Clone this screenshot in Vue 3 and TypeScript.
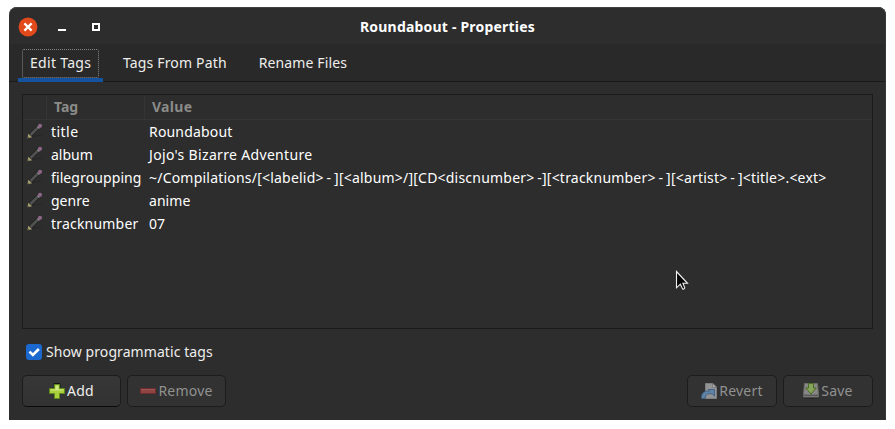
<script setup lang="ts">
import { ref } from 'vue'

interface Label {
  text: string
  // tracking in hundredths of a pixel
  track: number
}

interface TagRow {
  tag: Label
  value: Label
}

const rows: TagRow[] = [
  { tag: { text: 'title', track: 45 }, value: { text: 'Roundabout', track: 17 } },
  { tag: { text: 'album', track: 0 }, value: { text: "Jojo's Bizarre Adventure", track: 33 } },
  {
    tag: { text: 'filegroupping', track: 10 },
    value: {
      text: '~/Compilations/[<labelid> - ][<album>/][CD<discnumber> -][<tracknumber> - ][<artist> - ]<title>.<ext>',
      track: 21,
    },
  },
  { tag: { text: 'genre', track: 0 }, value: { text: 'anime', track: 5 } },
  { tag: { text: 'tracknumber', track: 20 }, value: { text: '07', track: 10 } },
]

const tabs: Label[] = [
  { text: 'Edit Tags', track: 30 },
  { text: 'Tags From Path', track: 16 },
  { text: 'Rename Files', track: 12 },
]

const activeTab = ref(0)
const showProgrammatic = ref(true)

const tracking = (label: Label) => ({ letterSpacing: `${label.track / 100}px` })
</script>

<template>
  <main class="window">
    <header class="titlebar">
      <div class="controls">
        <button class="close" aria-label="Close">
          <svg width="20" height="20" viewBox="0 0 20 20">
            <circle cx="10" cy="10" r="9.4" fill="#e2491b" />
            <path d="M6.400 6.400l7.200 7.200M13.600 6.400l-7.200 7.200" stroke="#fff" stroke-width="2.200" />
          </svg>
        </button>
        <button class="minimize" aria-label="Minimize"></button>
        <button class="maximize" aria-label="Maximize"></button>
      </div>
      <h1>Roundabout - Properties</h1>
    </header>

    <nav class="tabs">
      <button
        v-for="(tab, i) in tabs"
        :key="tab.text"
        class="tab"
        :class="{ active: i === activeTab }"
        @click="activeTab = i"
      >
        <span class="tab-label" :style="tracking(tab)">{{ tab.text }}</span>
      </button>
    </nav>

    <section class="page">
      <div class="list">
        <div class="row head">
          <span class="cell"></span>
          <span class="cell">Tag</span>
          <span class="cell value-head">Value</span>
        </div>
        <div v-for="row in rows" :key="row.tag.text" class="row">
          <span class="cell icon">
            <svg width="16" height="16" viewBox="0 0 16 16">
              <path d="M5 13.500L15 12" stroke="#272727" />
              <path d="M3.500 12L12.500 3" stroke="#222" stroke-width="4.200" />
              <path d="M3.500 12L12.500 3" stroke="#50524f" stroke-width="2.600" />
              <path d="M10.500 3.500l2 2" stroke="#858585" stroke-width="1.500" />
              <circle cx="13" cy="2.800" r="2.100" fill="#8e6588" />
              <path d="M.5 15.200l.8-4.400 3.800 3.400z" fill="#a59f6e" />
              <path d="M.5 15.200l.4-1.800 1.400 1.200z" fill="#5c5a46" />
            </svg>
          </span>
          <span class="cell" :style="tracking(row.tag)">{{ row.tag.text }}</span>
          <span class="cell value" :style="tracking(row.value)">{{ row.value.text }}</span>
        </div>
      </div>

      <label class="check">
        <input v-model="showProgrammatic" type="checkbox" />
        <span class="box">
          <svg v-if="showProgrammatic" width="16" height="16" viewBox="0 0 16 16">
            <path d="M3.500 7.600l3.400 3.400 6-6" fill="none" stroke="#fff" stroke-width="2.600" />
          </svg>
        </span>
        <span class="check-text">Show programmatic tags</span>
      </label>

      <footer class="actions">
        <button class="btn wide">
          <svg width="16" height="16" viewBox="0 0 16 16">
            <path d="M5 1.500V.5h6v5M11 5.500h5" fill="none" stroke="#151515" />
            <path d="M5.500 1.500h5v4h5v5h-5v5h-5v-5h-5v-5h5z" fill="#a9cf3b" stroke="#5f8a1e" />
            <path d="M6.500 10V2.500h3v4h5v1h-13v-1h5" fill="#d3e886" />
          </svg>
          <span>Add</span>
        </button>
        <button class="btn wide off">
          <svg width="16" height="16" viewBox="0 0 16 16">
            <rect x=".5" y="5.500" width="15" height="5" fill="#914444" stroke="#6d2c2e" />
            <path d="M1 6.500h14" stroke="#9d5656" />
          </svg>
          <span>Remove</span>
        </button>
        <span class="spacer"></span>
        <button class="btn off">
          <svg width="16" height="16" viewBox="0 0 16 16">
            <path d="M4.500.5h7.500l3.500 3.500v11.500h-11z" fill="#929394" stroke="#7c7e7f" />
            <path d="M11.500.5v4h4z" fill="#b0b0b0" stroke="#6b6c6c" stroke-width=".7" />
            <path d="M.5 15.500C.2 10.500 3 7.300 8.700 8.100L7.200 6.500h6.300v6.600l-2.200-2C7.500 9.900 4.300 11.200 4 15.500z" fill="#5f83a5" stroke="#3d5f82" stroke-width=".9" />
          </svg>
          <span>Revert</span>
        </button>
        <button class="btn off">
          <svg width="16" height="16" viewBox="0 0 16 16">
            <ellipse cx="8" cy="14.500" rx="8" ry="1.400" fill="#252525" />
            <path d="M1.500.5h13l1 11v2.500H.5v-2.500z" fill="#868786" stroke="#6b6c6a" />
            <path d="M.8 12.300h14.400" stroke="#595a59" stroke-width="1.600" />
            <path d="M5.500.5h5v4.500h2.700L8 11 2.800 5h2.700z" fill="#86a35a" stroke="#4c6b25" />
          </svg>
          <span>Save</span>
        </button>
      </footer>
    </section>

    <svg class="pointer" width="14" height="21" viewBox="0 0 14 21">
      <path d="M1.500 1.500v16.300l3.800-3.600 2.300 4.700q1.500.7 2.200-1L7.900 13.300h4.600z" fill="#050505" stroke="#f2f2f2" stroke-width="1.100" />
    </svg>
  </main>
</template>

<style>
body {
  background: #fff;
}
</style>

<style scoped>
* {
  box-sizing: border-box;
}
.window {
  position: relative;
  display: flex;
  flex-direction: column;
  width: 877px;
  height: 413px;
  margin: 7px 9px;
  overflow: hidden;
  background: #2d2d2d;
  border-radius: 8px 8px 0 0;
  box-shadow: inset 0 1px #404040, inset -1px 0 #373737;
  font: 14px/22px "Noto Sans", sans-serif;
  color: #fff;
}
button {
  font: inherit;
  color: inherit;
  border: 0;
  padding: 0;
  margin: 0;
  background: none;
}
svg {
  display: block;
  flex: none;
}
.titlebar {
  display: grid;
  grid-template-columns: 120px 1fr 120px;
  align-items: center;
  height: 37px;
  padding-top: 2px;
}
.controls {
  display: flex;
  align-items: center;
  padding-left: 9px;
}
.minimize {
  width: 8px;
  height: 8px;
  margin-left: 20px;
  border-bottom: 2px solid #fff;
}
.maximize {
  width: 8px;
  height: 8px;
  margin-left: 26px;
  border: 2px solid #fff;
}
h1 {
  margin: 0;
  text-align: center;
  font-size: 14px;
  line-height: 22px;
  letter-spacing: 0.2px;
}
.tabs {
  display: flex;
  gap: 8px;
  height: 38px;
  padding-left: 9px;
  margin-right: 1px;
  background: #292929;
  border-bottom: 1px solid #1a1a1a;
  color: #eeeeec;
}
.tab {
  height: 38px;
  padding: 5px 4px 0;
  border-bottom: 4px solid transparent;
}
.tab.active {
  border-bottom-color: #15539e;
}
.tab-label {
  display: block;
  height: 29px;
  padding: 2px 7px 0;
  border: 1px solid transparent;
  border-radius: 2px;
  white-space: nowrap;
}
.tab + .tab .tab-label {
  padding: 2px 7px 0;
}
.active .tab-label {
  width: 77px;
  border: 1px dotted #858585;
}
.page {
  display: flex;
  flex-direction: column;
  padding: 12px 13px 0;
}
.list {
  height: 235px;
  border: 1px solid #1b1b1b;
  overflow: hidden;
}
.row {
  display: grid;
  grid-template-columns: 24px 98px 1fr;
  height: 23px;
  white-space: nowrap;
}
.cell {
  padding-left: 4px;
  line-height: 23px;
}
.icon {
  padding: 3px 0 0 4px;
}
.value {
  word-spacing: -1px;
}
.row:nth-child(3) .value {
  word-spacing: 0;
}
.head {
  height: 25px;
  border-bottom: 1px solid #353535;
  color: #8b8b89;
  font-weight: 700;
}
.head .cell {
  padding-left: 7px;
  line-height: 24px;
  border-right: 1px solid #353535;
}
.head .cell:last-child {
  border-right: 0;
}
.value-head {
  letter-spacing: 0.3px;
}
.check {
  display: flex;
  align-items: center;
  gap: 4px;
  height: 22px;
  margin-top: 12px;
  padding-left: 4px;
  color: #eeeeec;
}
.check input {
  position: absolute;
  opacity: 0;
}
.box {
  width: 16px;
  height: 16px;
  border-radius: 3px;
  background: #1b68ce;
}
.check-text {
  letter-spacing: 0.08px;
}
.actions {
  display: flex;
  gap: 6px;
  margin-top: 12px;
}
.spacer {
  flex: 1;
}
.btn {
  display: flex;
  align-items: center;
  justify-content: center;
  gap: 2px;
  width: 90px;
  height: 32px;
  border: 1px solid #1c1c1c;
  border-bottom-color: #0c0c0c;
  border-radius: 5px;
  background: linear-gradient(#373737, #323232);
  color: #eeeeec;
  letter-spacing: 0.2px;
}
.wide {
  width: 99px;
}
.off {
  border-color: #1c1c1c;
  background: #323232;
  color: #919190;
}
.pointer {
  position: absolute;
  left: 666px;
  top: 263px;
}
</style>
